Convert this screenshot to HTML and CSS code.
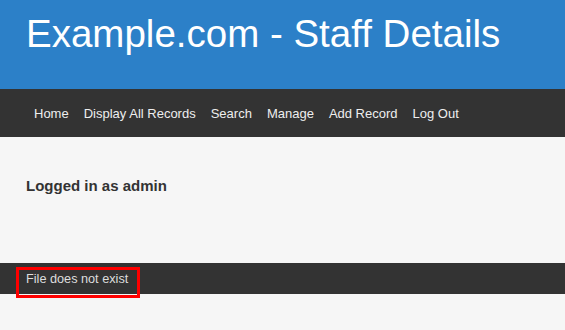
FILE: index.html
```html
<!DOCTYPE html>
<html lang="en">
<head>
    <meta charset="UTF-8">
    <meta name="viewport" content="width=device-width, initial-scale=1.0">
    <title>Example.com - Staff Details</title>
    <link rel="stylesheet" href="styles.css">
</head>
<body>
    <header class="site-header">
        <h1>Example.com - Staff Details</h1>
    </header>

    <nav class="main-nav">
        <a href="#">Home</a>
        <a href="#">Display All Records</a>
        <a href="#">Search</a>
        <a href="#">Manage</a>
        <a href="#">Add Record</a>
        <a href="#">Log Out</a>
    </nav>

    <main class="content">
        <h3>Logged in as admin</h3>
    </main>

    <footer class="site-footer">
        <p class="file-status">File does not exist</p>
    </footer>
</body>
</html>
```

FILE: styles.css
```css
body {
    margin: 0;
    min-height: 100vh;
    font-family: 'Liberation Sans', Arial, sans-serif;
    background-color: #f6f6f6;
    color: #333;
}
.site-header {
    background-color: #2c80c8;
    height: 89px;
    padding: 12px 26px 0;
    box-sizing: border-box;
}
.site-header h1 {
    margin: 0;
    font-size: 38.5px;
    font-weight: normal;
    color: #fff;
}
.main-nav {
    background-color: #333;
    height: 48px;
    display: flex;
    align-items: center;
    gap: 15px;
    padding: 0 34px;
}
.main-nav a {
    color: #eee;
    font-size: 13px;
    text-decoration: none;
}
.main-nav a:hover {
    text-decoration: underline;
}
.content {
    height: 126px;
    padding: 40px 26px 0;
    box-sizing: border-box;
}
.content h3 {
    margin: 0;
    font-size: 15px;
    font-weight: bold;
}
.site-footer {
    background-color: #333;
    height: 31px;
    padding: 4px 16px 0;
    box-sizing: border-box;
}
/* red highlight box hangs below the footer bar */
.file-status {
    margin: 0;
    width: 124px;
    height: 31px;
    box-sizing: border-box;
    padding: 2px 7px 0;
    border: 3px solid #f00;
    font-size: 12.7px;
    line-height: 15px;
    white-space: nowrap;
    color: #ddd;
}
```
